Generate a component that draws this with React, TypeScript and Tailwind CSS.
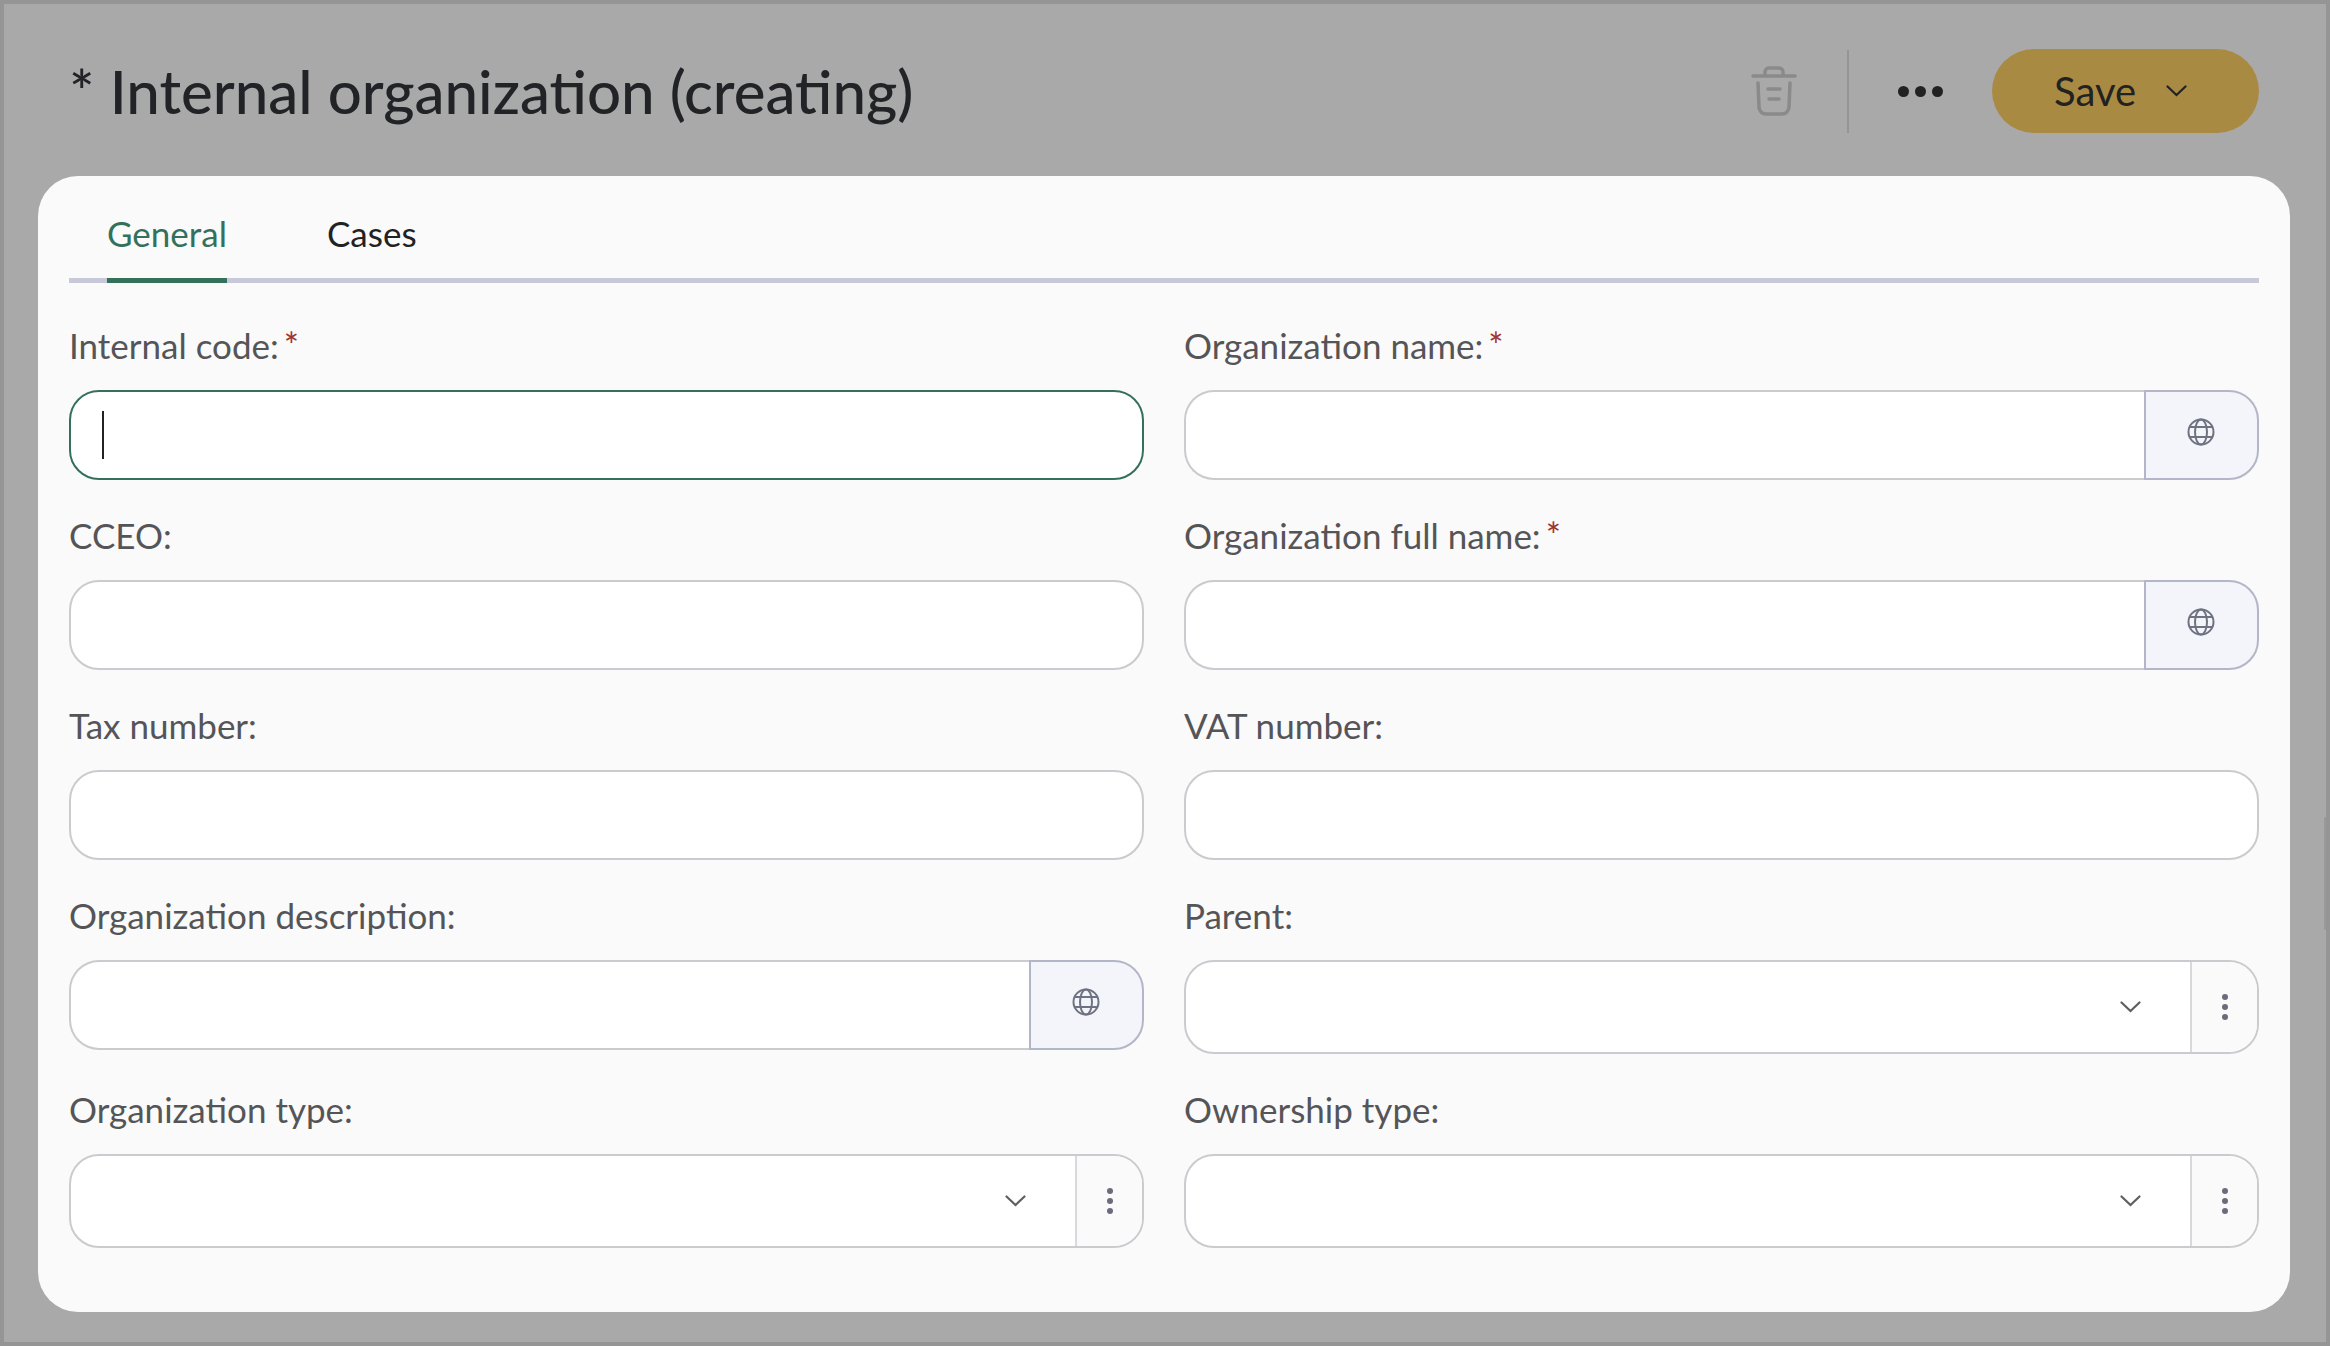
import type { ReactNode } from "react";

const labelClass = "flex h-[50px] items-center pb-[2px] text-[35px] leading-[48px] text-[#555558]";

function GlobeIcon() {
  return (
    <svg className="mr-[2px] -mt-[6px]" width="30" height="30" viewBox="0 0 30 30" fill="none" stroke="#6f7280" strokeWidth="2">
      <circle cx="15" cy="15" r="12.5" />
      <ellipse cx="15" cy="15" rx="6" ry="12.5" />
      <path d="M3.8 10h22.4M3.8 20h22.4" />
    </svg>
  );
}

function Chevron({ color = "#5f5f63" }: { color?: string }) {
  return (
    <svg width="21" height="12" viewBox="0 0 21 12" fill="none" stroke={color} strokeWidth="2.2" strokeLinecap="round">
      <path d="M1.5 1.5l9 8.5 9-8.5" />
    </svg>
  );
}

function Kebab() {
  return (
    <div className="flex flex-col gap-1">
      <span className="size-1.5 rounded-full bg-[#6b6b7b]" />
      <span className="size-1.5 rounded-full bg-[#6b6b7b]" />
      <span className="size-1.5 rounded-full bg-[#6b6b7b]" />
    </div>
  );
}

function Field({ label, required, children }: { label: string; required?: boolean; children: ReactNode }) {
  return (
    <div className="flex flex-col">
      <label className={labelClass}>
        {label}
        {required && <span className="ml-[5px] text-[36px] text-[#a03434]">*</span>}
      </label>
      <div className="mt-[19px]">{children}</div>
    </div>
  );
}

function TextInput() {
  return <input readOnly className="block h-[90px] w-full rounded-[30px] border-2 border-[#cbcbcf] bg-white px-[30px] outline-none" />;
}

function FocusedInput() {
  return (
    <div className="flex h-[90px] w-full items-center rounded-[30px] border-2 border-[#35705a] bg-white pl-[31px]">
      <span className="h-12 w-[2px] bg-[#222]" />
    </div>
  );
}

function LocalizedInput() {
  return (
    <div className="flex h-[90px] w-full">
      <input readOnly className="h-full min-w-0 flex-1 rounded-l-[30px] border-2 border-r-0 border-[#cbcbcf] bg-white px-[30px] outline-none" />
      <button className="flex h-full w-[115px] items-center justify-center rounded-r-[30px] border-2 border-[#b3b6c8] bg-[#f4f5fa]">
        <GlobeIcon />
      </button>
    </div>
  );
}

function SelectInput() {
  return (
    <div className="flex h-[94px] w-full overflow-hidden rounded-[30px] border-2 border-[#cbcbcf] bg-white">
      <div className="flex flex-1 items-center justify-end pr-[49px]">
        <Chevron />
      </div>
      <div className="flex h-full w-[67px] items-center justify-center border-l-2 border-[#d8d8dd] bg-[#fafafa]">
        <Kebab />
      </div>
    </div>
  );
}

export default function App() {
  return (
    <div className="relative flex h-screen w-full flex-col border-4 border-[#959595] bg-[#a9a9a9] pr-[36px] pl-[34px] font-['Lato',sans-serif]">
      {/* leftover scrollbar edge showing through the dimmed page */}
      <div className="absolute top-[813px] right-0 h-[113px] w-[2px] rounded-full bg-[#999]" />

      <header className="flex h-[172px] shrink-0 items-start justify-between px-[31px] pt-[45px]">
        <h1 className="flex h-[84px] items-center text-[60px] font-medium text-[#212326]">* Internal organization (creating)</h1>
        <div className="flex h-[84px] items-center">
          <svg width="46" height="52" viewBox="0 0 46 52" fill="none" stroke="#8a8a8a" strokeWidth="3.5" strokeLinecap="round" strokeLinejoin="round">
            <path d="M2 11h42M14 11V7a4 4 0 0 1 4-4h10a4 4 0 0 1 4 4v4" />
            <path d="M7 18l1 24a7 7 0 0 0 7 7h16a7 7 0 0 0 7-7l1-24" />
            <path d="M17 24h12M18 34h10" />
          </svg>
          <div className="mr-[49px] ml-[50px] h-[83px] w-[2px] bg-[#959595]" />
          <div className="flex gap-[6px]">
            <span className="size-[11px] rounded-full bg-[#222]" />
            <span className="size-[11px] rounded-full bg-[#222]" />
            <span className="size-[11px] rounded-full bg-[#222]" />
          </div>
          <button className="ml-[49px] flex h-[84px] w-[267px] items-center rounded-full bg-[#a98a43] pl-[62px] text-[40px] text-[#222]">
            Save
            <span className="ml-[30px] flex">
              <Chevron color="#222" />
            </span>
          </button>
        </div>
      </header>

      <main className="h-[1136px] shrink-0 rounded-[40px] bg-[#fafafa] px-[31px]">
        <nav className="flex h-[107px] gap-[100px] border-b-[5px] border-[#c8c9d8] pl-[38px]">
          <a className="-mb-[5px] flex items-center border-b-[5px] border-[#35705a] pt-[12px] text-[35px] text-[#35705a]">General</a>
          <a className="flex items-center pt-[12px] text-[35px] text-[#222]">Cases</a>
        </nav>

        <form className="mt-[38px] grid grid-cols-2 gap-x-[40px] gap-y-[31px]">
          <Field label="Internal code:" required>
            <FocusedInput />
          </Field>
          <Field label="Organization name:" required>
            <LocalizedInput />
          </Field>
          <Field label="CCEO:">
            <TextInput />
          </Field>
          <Field label="Organization full name:" required>
            <LocalizedInput />
          </Field>
          <Field label="Tax number:">
            <TextInput />
          </Field>
          <Field label="VAT number:">
            <TextInput />
          </Field>
          <Field label="Organization description:">
            <LocalizedInput />
          </Field>
          <Field label="Parent:">
            <SelectInput />
          </Field>
          <Field label="Organization type:">
            <SelectInput />
          </Field>
          <Field label="Ownership type:">
            <SelectInput />
          </Field>
        </form>
      </main>
    </div>
  );
}
